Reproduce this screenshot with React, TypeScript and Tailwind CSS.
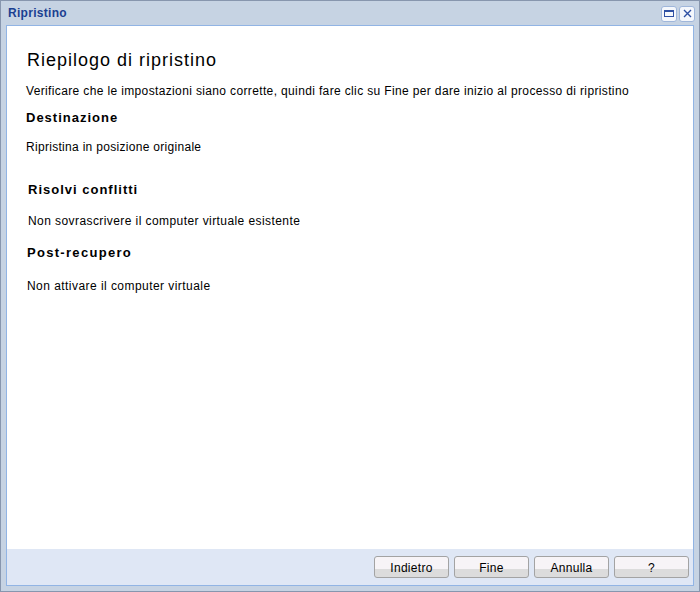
import React from "react";

function Btn({ label }: { label: string }) {
  return (
    <div className="w-[75px] h-[22px] rounded-[3px] border border-[#a3a3a3] bg-[linear-gradient(to_bottom,#f7f4f7_0%,#f7f4f7_62%,#dcdcdc_62%,#dcdcdc_100%)] flex items-center justify-center text-[12px] leading-[14px] text-black tracking-[0.3px] pt-[1px]">
      {label}
    </div>
  );
}

export default function App() {
  return (
    <div
      className="w-[700px] h-[592px] bg-[#c6d3e3] border border-[#8796ae] flex flex-col"
      style={{ fontFamily: '"Liberation Sans", Arial, sans-serif' }}
    >
      <div className="h-[24px] flex items-center justify-between pl-[7px] pr-[4px]">
        <span className="text-[12px] font-bold text-[#1b3f91] tracking-[0.3px]">Ripristino</span>
        <div className="flex gap-[2px] mt-[1px]">
          <div className="w-[16px] h-[16px] rounded-[3px] border border-[#9fb6da] bg-[#f4f7fc] flex items-center justify-center">
            <div className="w-[10px] h-[7px] border border-[#2d4fa3] border-t-[2px]" />
          </div>
          <div className="w-[16px] h-[16px] rounded-[3px] border border-[#9fb6da] bg-[#f4f7fc] flex items-center justify-center">
            <svg width="9" height="9" viewBox="0 0 9 9">
              <path d="M1 1 L8 8 M8 1 L1 8" stroke="#2d4fa3" strokeWidth="1.4" />
            </svg>
          </div>
        </div>
      </div>
      <div className="flex-1 mx-[5px] mb-[5px] border border-[#91b4e4] flex flex-col">
        <div className="flex-1 bg-white pl-[19px] text-black">
          <div className="mt-[23px] text-[18px] leading-[22px] pl-[1px] tracking-[1px]">Riepilogo di ripristino</div>
          <div className="mt-[12px] text-[12px] leading-[16px] tracking-[0.36px]">
            Verificare che le impostazioni siano corrette, quindi fare clic su Fine per dare inizio al processo di ripristino
          </div>
          <div className="mt-[11px] text-[13px] leading-[16px] font-bold tracking-[1px]">Destinazione</div>
          <div className="mt-[13px] text-[12px] leading-[16px] tracking-[0.3px]">Ripristina in posizione originale</div>
          <div className="mt-[27px] text-[13px] leading-[16px] font-bold pl-[2px] tracking-[1px]">Risolvi conflitti</div>
          <div className="mt-[15px] text-[12px] leading-[16px] pl-[2px] tracking-[0.42px]">Non sovrascrivere il computer virtuale esistente</div>
          <div className="mt-[16px] text-[13px] leading-[16px] font-bold pl-[1px] tracking-[1.3px]">Post-recupero</div>
          <div className="mt-[17px] text-[12px] leading-[16px] pl-[1px] tracking-[0.45px]">Non attivare il computer virtuale</div>
        </div>
        <div className="h-[36px] bg-[#dfe7f5] flex justify-end items-start pt-[7px] pr-[4px] gap-[5px]">
          <Btn label="Indietro" />
          <Btn label="Fine" />
          <Btn label="Annulla" />
          <Btn label="?" />
        </div>
      </div>
    </div>
  );
}
